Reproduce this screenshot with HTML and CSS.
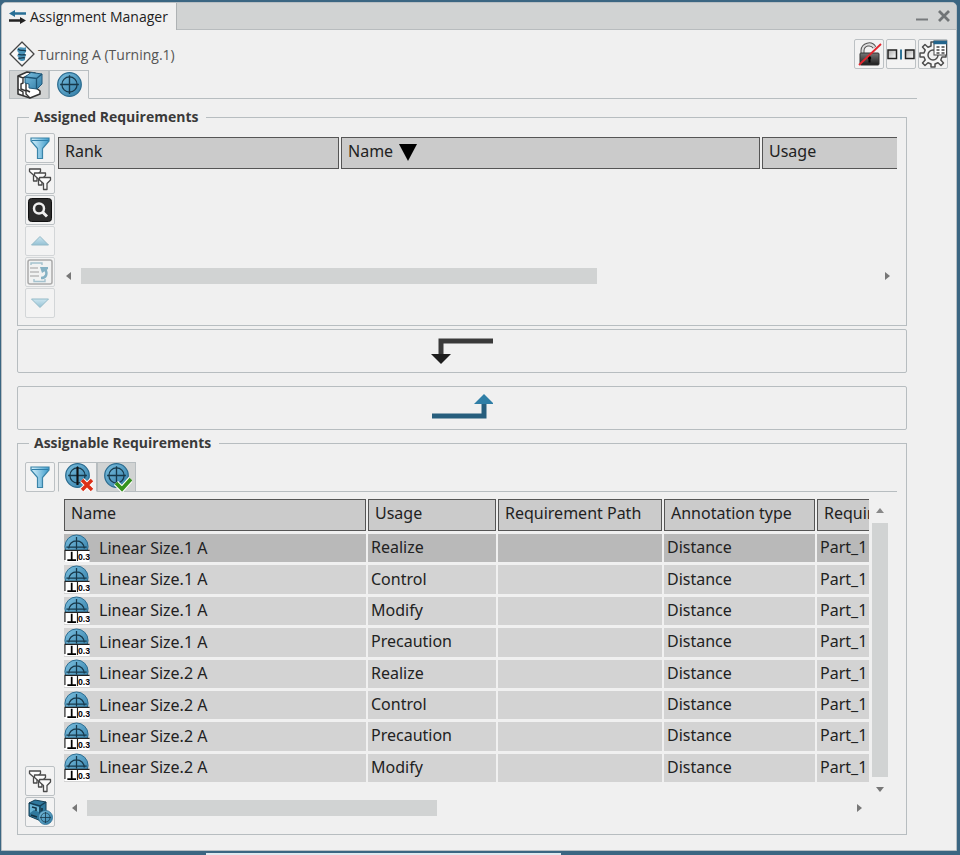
FILE: index.html
```html
<!DOCTYPE html>
<html lang="en">
<head>
  <meta charset="UTF-8">
  <meta name="viewport" content="width=device-width, initial-scale=1.0">
  <title>Assignment Manager</title>
  <link rel="stylesheet" href="styles.css">
</head>
<body>
  <!-- shared icons -->
  <svg class="defs" width="0" height="0" aria-hidden="true">
    <defs>
      <linearGradient id="blue" x1="0" y1="0" x2="1" y2="1">
        <stop offset="0" stop-color="#7cc0e0"/>
        <stop offset="1" stop-color="#2f7ba5"/>
      </linearGradient>
      <linearGradient id="sky" x1="0" y1="0" x2="1" y2="0">
        <stop offset="0" stop-color="#d8f2fc"/>
        <stop offset="1" stop-color="#3d9bcb"/>
      </linearGradient>
      <linearGradient id="pale" x1="0" y1="0" x2="0" y2="1">
        <stop offset="0" stop-color="#cde6f0"/>
        <stop offset="1" stop-color="#94c1d4"/>
      </linearGradient>
      <linearGradient id="dark" x1="0" y1="0" x2="0" y2="1">
        <stop offset="0" stop-color="#777"/>
        <stop offset="1" stop-color="#1c1c1c"/>
      </linearGradient>
      <linearGradient id="steel" x1="0" y1="0" x2="1" y2="1">
        <stop offset="0" stop-color="#aaa"/>
        <stop offset="1" stop-color="#fff"/>
      </linearGradient>
    </defs>
    <symbol id="target" viewBox="0 0 24 24">
      <circle cx="12" cy="12" r="11.3" fill="url(#blue)" stroke="#2a6b8f" stroke-width="1.2"/>
      <circle cx="12" cy="12" r="7.3" fill="none" stroke="#17384a" stroke-width="1.2"/>
      <path d="M12 3v18M3 12h18" stroke="#17384a" stroke-width="1.3"/>
    </symbol>
    <symbol id="funnel" viewBox="0 0 24 24">
      <path d="M3 2h18v3l-6.500 7.500v10h-5v-10L3 5z" fill="url(#sky)" stroke="#3b84a8" stroke-width="1.2"/>
      <path d="M3.500 4.500h17" stroke="#2f7ea8"/>
    </symbol>
    <symbol id="funnels" viewBox="0 0 24 24">
      <g fill="#fbfbfb" stroke="#4a4a4a" stroke-width="1.3" stroke-linejoin="round">
        <path d="M1.500 2h11v2.500L9 8v6H5.500V8l-4-3.500z"/>
        <path d="M6.500 6h11v2.500L14 12v6h-3.500v-6l-4-3.500z"/>
        <path d="M11.500 10.500h11V13L19 16.500v6h-3.500v-6l-4-3.500z"/>
      </g>
    </symbol>
    <symbol id="tolerance" viewBox="0 0 26 29">
      <circle cx="12.500" cy="13" r="12" fill="url(#blue)" stroke="#2a6b8f"/>
      <path d="M4.500 15a8 8 0 0 1 16 0M12.500 3v13M2 13.500h21" fill="none" stroke="#17384a" stroke-width="1.3"/>
      <path d="M0 17h26v12H0z" fill="#fff"/>
      <path d="M0 17h26M.5 17v10M13.500 17v11" stroke="#222" stroke-width="1.2"/>
      <path d="M7.500 18.500v8M3 27h9" stroke="#000" stroke-width="1.800"/>
      <text x="14" y="27" font-size="9" font-weight="bold" font-family="Liberation Sans Narrow, Liberation Sans, sans-serif">0.3</text>
    </symbol>
  </svg>

  <main class="window">
    <header class="titlebar">
      <h1 class="title">
        <svg width="17" height="14" viewBox="0 0 17 14">
          <path d="M17 3.500H5" stroke="#286f96" stroke-width="2.500"/><path d="M0 3.500 6 0v7z" fill="#286f96"/>
          <path d="M0 10.500h12" stroke="#222" stroke-width="2.500"/><path d="M17 10.500 11 7v7z" fill="#222"/>
        </svg>
        Assignment Manager
      </h1>
      <div class="window-buttons">
        <button aria-label="Minimize"><svg width="14" height="14" viewBox="0 0 14 14"><path d="M1 10.500h12" stroke="#777a7c" stroke-width="2"/></svg></button>
        <button aria-label="Close"><svg width="14" height="14" viewBox="0 0 14 14"><path d="M2 2l10 10M12 2 2 12" stroke="#707476" stroke-width="2.800"/></svg></button>
      </div>
    </header>

    <div class="content">
      <div class="operation">
        <svg width="26" height="26" viewBox="0 0 26 26">
          <path d="M13 1 25 13 13 25 1 13z" fill="#f8f8f8" stroke="#444" stroke-width="1.300" stroke-linejoin="round"/>
          <path d="M9 7c3-2 6 1 8-1v5c-2 1-1 3 0 3-1 2-1 3-1 5-2 2-5 1-7-1 2-1 1-2-1-3 2-2 3-2 1-4-1-1-1-2 0-4z" fill="#4a94b9"/>
          <path d="M9 8c3 3 5 0 8 2M9 13c3 2 5 0 8 1M9 17c3 1 5-1 7 0" fill="none" stroke="#183c50" stroke-width="1.300"/>
        </svg>
        <span class="operation-name">Turning A (Turning.1)</span>
        <div class="operation-buttons">
          <button class="tool" aria-label="Unlock">
            <svg width="26" height="26" viewBox="0 0 26 26">
              <path d="M6.500 12V9.500a6.500 6.500 0 0 1 12-3" fill="none" stroke="#555" stroke-width="4"/>
              <path d="M6.500 12V9.500a6.500 6.500 0 0 1 12-3" fill="none" stroke="#ddd" stroke-width="2"/>
              <rect x="4" y="12" width="19" height="12" rx="1" fill="url(#dark)" stroke="#333"/>
              <path d="M13.500 15a2 2 0 0 1 1 3.500v3h-2v-3a2 2 0 0 1 1-3.500z" fill="#050505"/>
              <path d="M3 24 25 3" stroke="#e3262e" stroke-width="1.800"/>
            </svg>
          </button>
          <button class="tool" aria-label="Split view">
            <svg width="28" height="26" viewBox="0 0 28 26">
              <rect x="1" y="9" width="8.500" height="8.500" fill="url(#steel)" stroke="#222" stroke-width="1.500"/>
              <rect x="18.500" y="9" width="8.500" height="8.500" fill="url(#steel)" stroke="#222" stroke-width="1.500"/>
              <path d="M14 8.500v10" stroke="#2f7396" stroke-width="2"/>
            </svg>
          </button>
          <button class="tool" aria-label="Settings">
            <svg width="28" height="28" viewBox="0 0 28 28">
              <path d="M12 2h4v4l3 1.200L22 4.500l2.500 2.500-2.700 3L23 13h4v4h-4l-1.200 3 2.700 3-2.500 2.500-3-2.700-3 1.200v3h-4v-3l-3-1.200-3 2.700L3.500 23l2.700-3L5 17H1v-4h4l1.200-3-2.700-3L6 4.500l3 2.700L12 6z" fill="#f6f6f6" stroke="#4d4d4d" stroke-width="1.500" stroke-linejoin="round"/>
              <circle cx="14" cy="15" r="5" fill="#f0f0f0" stroke="#4d4d4d" stroke-width="1.500"/>
              <rect x="15" y="1" width="12.500" height="14" fill="#fff" stroke="#444"/>
              <path d="M14.500 2.500H28" stroke="#24658c" stroke-width="3.500"/>
              <path d="M17.500 7h3M22.500 7h3M17.500 10h3M22.500 10h3M17.500 13h3M22.500 13h3" stroke="#444" stroke-width="1.600"/>
            </svg>
          </button>
        </div>
      </div>

      <div class="tabs main-tabs" role="tablist">
        <button class="tab" role="tab" aria-label="Features" aria-selected="false">
          <svg width="28" height="28" viewBox="0 0 28 28">
            <path d="M3 5 12 1l8 1v14l5 4v3l-10 4-12-4z" fill="#fff" stroke="#333" stroke-width="1.600" stroke-linejoin="round"/>
            <path d="M3 5l5 2 4-2M8 7v5l-2 1v5l5 2v3l4 4M11 12v7l4 2M3 18l5 3v4" fill="none" stroke="#333" stroke-width="1.400"/>
            <path d="M10 6 16 1.500 27 3v10l-5 5-8-1v-4l-4-1z" fill="url(#blue)" stroke="#205a7c"/>
            <path d="M10 6l11.500 1.500L27 3M21.500 7.500V18" fill="none" stroke="#1d5475" stroke-width="1.300"/>
          </svg>
        </button>
        <button class="tab selected" role="tab" aria-label="Requirements" aria-selected="true">
          <svg width="25" height="25"><use href="#target"/></svg>
        </button>
      </div>

      <fieldset class="panel">
        <legend>Assigned Requirements</legend>
        <div class="panel-body">
          <div class="toolbar">
            <button class="tool" aria-label="Filter"><svg width="24" height="24"><use href="#funnel"/></svg></button>
            <button class="tool" aria-label="Multiple filters"><svg width="24" height="24"><use href="#funnels"/></svg></button>
            <button class="tool" aria-label="Search">
              <svg width="24" height="24" viewBox="0 0 24 24">
                <rect x=".5" y=".5" width="23" height="23" rx="3" fill="#2b2b2b" stroke="#111"/>
                <circle cx="11" cy="10.500" r="5" fill="none" stroke="#eee" stroke-width="2.500"/>
                <path d="M14.500 14l4.500 4.500" stroke="#eee" stroke-width="3"/>
              </svg>
            </button>
            <button class="tool" aria-label="Move up" disabled><svg width="24" height="24" viewBox="0 0 24 24"><path d="M12 7.500 20.500 16h-17z" fill="url(#pale)" stroke="#94bac8"/></svg></button>
            <button class="tool" aria-label="Reorder" disabled>
              <svg width="26" height="26" viewBox="0 0 26 26">
                <rect x="1" y="1" width="24" height="24" rx="2" fill="#f1f2f2" stroke="#aaa" stroke-width="1.500"/>
                <path d="M4 6V4h11v2M7 20v2.500h11V20" fill="none" stroke="#a4c2ce" stroke-width="1.400"/>
                <path d="M3 9h8M3 13h9M3 17h9" stroke="#bbb" stroke-width="1.300"/>
                <path d="M14 19c5 0 7-4 4-9" fill="none" stroke="#86b2c4" stroke-width="2.500"/>
                <path d="M13 8h8v2l-6 4z" fill="#86b2c4"/>
              </svg>
            </button>
            <button class="tool" aria-label="Move down" disabled><svg width="24" height="24" viewBox="0 0 24 24"><path d="M12 16.500 20.500 8h-17z" fill="url(#pale)" stroke="#94bac8"/></svg></button>
          </div>
          <div class="assigned">
            <div class="table-clip">
              <table class="assigned-table">
                <thead>
                  <tr>
                    <th class="col-rank">Rank</th>
                    <th class="col-name">Name <svg class="sort" width="18" height="17" viewBox="0 0 18 17"><path d="M0 0h18L9 17z"/></svg></th>
                    <th>Usage</th>
                  </tr>
                </thead>
              </table>
            </div>
            <div class="scroll-x">
              <span class="arrow left"></span>
              <div class="track"><div class="thumb wide"></div></div>
              <span class="arrow right"></span>
            </div>
          </div>
        </div>
      </fieldset>

      <button class="move move-down" aria-label="Unassign">
        <svg width="62" height="28" viewBox="0 0 62 28">
          <path d="M62 4H10v14" fill="none" stroke="#3a3a3a" stroke-width="5"/>
          <path d="M0 17h20L10 27z" fill="#1d1d1d"/>
        </svg>
      </button>
      <button class="move move-up" aria-label="Assign">
        <svg width="62" height="28" viewBox="0 0 62 28">
          <path d="M1 22h52V10" fill="none" stroke="#275e7d" stroke-width="5"/>
          <path d="M43 10h20L53 0z" fill="#2f7ea6"/>
        </svg>
      </button>

      <fieldset class="panel">
        <legend>Assignable Requirements</legend>
        <div class="panel-body assignable-body">
          <div class="toolbar">
            <button class="tool" aria-label="Filter"><svg width="24" height="24"><use href="#funnel"/></svg></button>
            <button class="tool push" aria-label="Multiple filters"><svg width="24" height="24"><use href="#funnels"/></svg></button>
            <button class="tool" aria-label="Part requirements">
              <svg width="26" height="26" viewBox="0 0 26 26">
                <path d="M2 4 8 1l11 2v14l-5 5L2 17z" fill="#2f789d" stroke="#153e55"/>
                <path d="M2 4l11 3 6-4M13 7v14" fill="none" stroke="#153e55" stroke-width="1.500"/>
                <path d="M3 5l9 3v5l-5-2-4 3z" fill="#6bb4d4"/>
                <path d="M5 8l4 1v3M4 16l6 2M15 9v5l3-2" fill="none" stroke="#123142" stroke-width="1.600"/>
                <use href="#target" x="11" y="11" width="15" height="15"/>
              </svg>
            </button>
          </div>
          <div class="assignable">
            <div class="tabs" role="tablist">
              <button class="tab selected" role="tab" aria-label="Not assigned" aria-selected="true">
                <svg width="30" height="29" viewBox="0 0 30 29">
                  <use href="#target" x="2" y="0" width="25" height="25"/>
                  <path d="M14.500 4v18" stroke="#111" stroke-width="2"/>
                  <path d="M19 17l10 10M29 17 19 27" stroke="#fff" stroke-width="5.500"/>
                  <path d="M19 17l10 10M29 17 19 27" stroke="#dc3018" stroke-width="3.500"/>
                </svg>
              </button>
              <button class="tab" role="tab" aria-label="Assigned" aria-selected="false">
                <svg width="30" height="29" viewBox="0 0 30 29">
                  <use href="#target" x="2" y="0" width="25" height="25"/>
                  <path d="M14 20l6 6L29 16" fill="none" stroke="#fff" stroke-width="6"/>
                  <path d="M14 20l6 6L29 16" fill="none" stroke="#36931d" stroke-width="3.800"/>
                </svg>
              </button>
            </div>
            <div class="list">
              <div class="table-clip">
                <table class="assignable-table">
                  <thead>
                    <tr>
                      <th class="col-req">Name</th>
                      <th class="col-usage">Usage</th>
                      <th class="col-path">Requirement Path</th>
                      <th class="col-type">Annotation type</th>
                      <th>Requirement</th>
                    </tr>
                  </thead>
                  <tbody>
                    <tr class="current"><td><div class="req"><svg width="26" height="28"><use href="#tolerance"/></svg>Linear Size.1 A</div></td><td>Realize</td><td></td><td>Distance</td><td>Part_1</td></tr>
                    <tr><td><div class="req"><svg width="26" height="28"><use href="#tolerance"/></svg>Linear Size.1 A</div></td><td>Control</td><td></td><td>Distance</td><td>Part_1</td></tr>
                    <tr><td><div class="req"><svg width="26" height="28"><use href="#tolerance"/></svg>Linear Size.1 A</div></td><td>Modify</td><td></td><td>Distance</td><td>Part_1</td></tr>
                    <tr><td><div class="req"><svg width="26" height="28"><use href="#tolerance"/></svg>Linear Size.1 A</div></td><td>Precaution</td><td></td><td>Distance</td><td>Part_1</td></tr>
                    <tr><td><div class="req"><svg width="26" height="28"><use href="#tolerance"/></svg>Linear Size.2 A</div></td><td>Realize</td><td></td><td>Distance</td><td>Part_1</td></tr>
                    <tr><td><div class="req"><svg width="26" height="28"><use href="#tolerance"/></svg>Linear Size.2 A</div></td><td>Control</td><td></td><td>Distance</td><td>Part_1</td></tr>
                    <tr><td><div class="req"><svg width="26" height="28"><use href="#tolerance"/></svg>Linear Size.2 A</div></td><td>Precaution</td><td></td><td>Distance</td><td>Part_1</td></tr>
                    <tr><td><div class="req"><svg width="26" height="28"><use href="#tolerance"/></svg>Linear Size.2 A</div></td><td>Modify</td><td></td><td>Distance</td><td>Part_1</td></tr>
                  </tbody>
                </table>
              </div>
              <div class="scroll-y">
                <span class="arrow up"></span>
                <div class="thumb"></div>
                <span class="arrow down"></span>
              </div>
              <div class="scroll-x">
                <span class="arrow left"></span>
                <div class="track"><div class="thumb narrow"></div></div>
                <span class="arrow right"></span>
              </div>
            </div>
          </div>
        </div>
      </fieldset>
    </div>
  </main>
</body>
</html>
```

FILE: styles.css
```css
*{
  box-sizing: border-box;
}
body{
  margin: 0;
  min-height: 100vh;
  display: flex;
  padding: 2px 3px 4px 1px;
  background: linear-gradient(#dfe9ef, #dfe9ef) 34% 100% / 37% 2px no-repeat #3b6682;
  font-family: "Open Sans", "Noto Sans", sans-serif;
  font-size: 14px;
  color: #333;
}
svg{
  display: block;
  flex: none;
}
.defs{
  position: absolute;
}
button{
  display: flex;
  align-items: center;
  justify-content: center;
  padding: 0;
  border: none;
  background: none;
}
.window{
  flex: 1;
  min-width: 0;
  background: #f0f0f0;
  border: 1px solid #b9bfc3;
  border-radius: 5px 5px 0 0;
}

/* title bar */
.titlebar{
  display: flex;
  justify-content: space-between;
  height: 27px;
  background: #d1d3d3;
  border-bottom: 1px solid #b8bcbe;
  border-radius: 4px 4px 0 0;
}
.title{
  display: flex;
  align-items: center;
  gap: 4px;
  height: 27px;
  margin: 0;
  padding: 0 8px 0 7px;
  background: #f0f0f0;
  border-right: 1px solid #aeb2b4;
  border-radius: 4px 0 0 0;
  font-size: 14px;
  font-weight: normal;
  color: #222;
}
.window-buttons{
  display: flex;
  align-items: center;
  gap: 8px;
  padding-right: 5px;
}

.content{
  padding: 9px 49px 14px 15px;
}
.operation{
  display: flex;
  align-items: center;
  gap: 3px;
  height: 30px;
  margin: 0 -41px 0 -8px;
  color: #555;
}
.operation-buttons{
  display: flex;
  gap: 2px;
  margin-left: auto;
}
.tool{
  width: 30px;
  height: 30px;
  background: #f3f3f3;
  border: 1px solid #bcc1c4;
  border-radius: 2px;
}
.tool:disabled{
  border-color: #d3d6d8;
}

/* tabs */
.tabs{
  display: flex;
  height: 30px;
  border-bottom: 1px solid #b7bdc0;
}
.main-tabs{
  height: 29px;
  margin: 1px -10px 1px -8px;
}
.tab{
  width: 39px;
  height: 30px;
  background: #d1d3d3;
  border: 1px solid #b7bdc0;
}
.main-tabs .tab{
  width: 40px;
  height: 29px;
}
.tab.selected{
  background: #f0f0f0;
  border-bottom-color: #f0f0f0;
}

/* panels */
.panel{
  min-width: 0;
  margin: 8px 0 0;
  padding: 6px 9px 7px 7px;
  border: 1px solid #b7bdc0;
}
.panel legend{
  height: 20px;
  margin-left: 4px;
  padding: 0 8px 0 5px;
  line-height: 20px;
  font-weight: bold;
  font-size: 14px;
  color: #3a3a3a;
}
.panel-body{
  display: flex;
  gap: 3px;
}
.assignable-body{
  padding-top: 3px;
}
.toolbar{
  display: flex;
  flex-direction: column;
  gap: 1px;
}
.push{
  margin-top: auto;
}
.assigned, .assignable{
  flex: 1;
  min-width: 0;
}
.assigned{
  padding-top: 4px;
}

/* tables */
.table-clip{
  min-width: 0;
  overflow: hidden;
}
table{
  width: 1060px;
  table-layout: fixed;
  border-spacing: 2px 3px;
  margin: -3px -2px;
  font-family: "Noto Sans", sans-serif;
  font-size: 16px;
  line-height: 20px;
  color: #222;
}
th{
  height: 32px;
  padding: 0 6px 4px;
  border: 1px solid #555;
  background: #cbcbcb;
  font-weight: normal;
  text-align: left;
  white-space: nowrap;
}
td{
  padding: 0 3px 2px;
  background: #d3d3d3;
  white-space: nowrap;
}
td:first-child{
  padding: 0;
}
.current td{
  background: #b9b9b9;
}
.assignable-table{
  height: 289px;
}
.req{
  display: flex;
  align-items: center;
  gap: 9px;
  height: 28px;
  padding-bottom: 1px;
}
.sort{
  display: inline-block;
  margin-left: 2px;
  vertical-align: -4px;
}
.col-rank{
  width: 281px;
}
.col-name{
  width: 419px;
}
.col-req{
  width: 302px;
}
.col-usage{
  width: 128px;
}
.col-path{
  width: 164px;
}
.col-type{
  width: 151px;
}

/* scroll bars */
.scroll-x{
  display: flex;
  align-items: center;
  gap: 10px;
  height: 16px;
}
.assigned .scroll-x{
  margin: 99px 7px 0 8px;
}
.track{
  flex: 1;
}
.thumb{
  height: 16px;
  background: #d1d3d3;
}
.thumb.wide{
  width: 65%;
}
.thumb.narrow{
  width: 46%;
}
.arrow{
  border: 4px solid transparent;
}
.arrow.left{
  border-right: 5px solid #777;
  border-left: 0;
}
.arrow.right{
  border-left: 5px solid #777;
  border-right: 0;
}
.arrow.up{
  border-bottom: 5px solid #888;
  border-top: 0;
}
.arrow.down{
  border-top: 5px solid #777;
  border-bottom: 0;
}
.list{
  display: grid;
  grid-template-columns: 1fr 16px;
  gap: 0 3px;
  padding: 7px 9px 11px 6px;
}
.scroll-y{
  display: flex;
  flex-direction: column;
  align-items: center;
  gap: 10px;
  margin: 9px 0 -10px;
}
.scroll-y .thumb{
  flex: 1;
  width: 16px;
}
.list .scroll-x{
  margin: 18px 7px 0 8px;
}

/* move buttons */
.move{
  width: 100%;
  height: 44px;
  margin-top: 3px;
  border: 1px solid #b7bdc0;
  border-radius: 2px;
}
.move-up{
  margin-top: 13px;
}
.move + .panel{
  margin-top: 3px;
}
```
